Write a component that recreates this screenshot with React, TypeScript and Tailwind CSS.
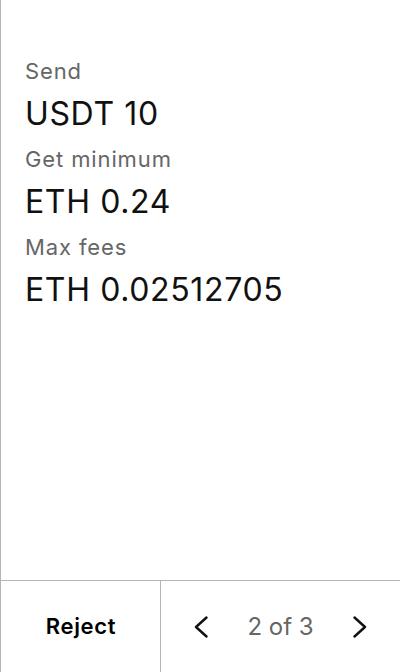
import { ReactNode } from 'react';

const details = [
  { label: 'Send', value: 'USDT 10' },
  { label: 'Get minimum', value: 'ETH 0.24' },
  { label: 'Max fees', value: 'ETH 0.02512705' },
];

const Chevron = ({ dir }: { dir: 'left' | 'right' }) => (
  <svg width="16" height="22" viewBox="0 0 16 22" fill="none">
    <path
      d={dir === 'left' ? 'M13.5 1.5 L3 11 L13.5 20.5' : 'M2.5 1.5 L13 11 L2.5 20.5'}
      stroke="#111"
      strokeWidth="2.4"
      strokeLinecap="round"
      strokeLinejoin="round"
    />
  </svg>
);

const NavButton = ({ children }: { children: ReactNode }) => (
  <button className="flex h-10 w-10 items-center justify-center">{children}</button>
);

export default function App() {
  return (
    <div
      className="flex h-[672px] w-[400px] flex-col border-l border-[#b5b5b5] bg-white text-black"
      style={{ fontFamily: 'Inter, "Noto Sans", sans-serif' }}
    >
      <div className="flex-1 px-6 pt-[57px]">
        {details.map((d) => (
          <div key={d.label} className="pb-[11px]">
            <div className="text-[22px] leading-[28px] tracking-[0.04em] text-[#666]">{d.label}</div>
            <div className="mt-[9px] text-[32px] leading-[40px] tracking-[0.02em] text-[#111]">
              {d.value}
            </div>
          </div>
        ))}
      </div>

      <div className="flex h-[92px] border-t border-[#b5b5b5]">
        <button className="w-[160px] border-r border-[#b5b5b5] pl-[1px] text-[22px] font-semibold tracking-[0.03em]">
          Reject
        </button>
        <div className="flex flex-1 items-center justify-between px-[20px]">
          <NavButton>
            <Chevron dir="left" />
          </NavButton>
          <span className="text-[24px] text-[#666]">2 of 3</span>
          <NavButton>
            <Chevron dir="right" />
          </NavButton>
        </div>
      </div>
    </div>
  );
}
